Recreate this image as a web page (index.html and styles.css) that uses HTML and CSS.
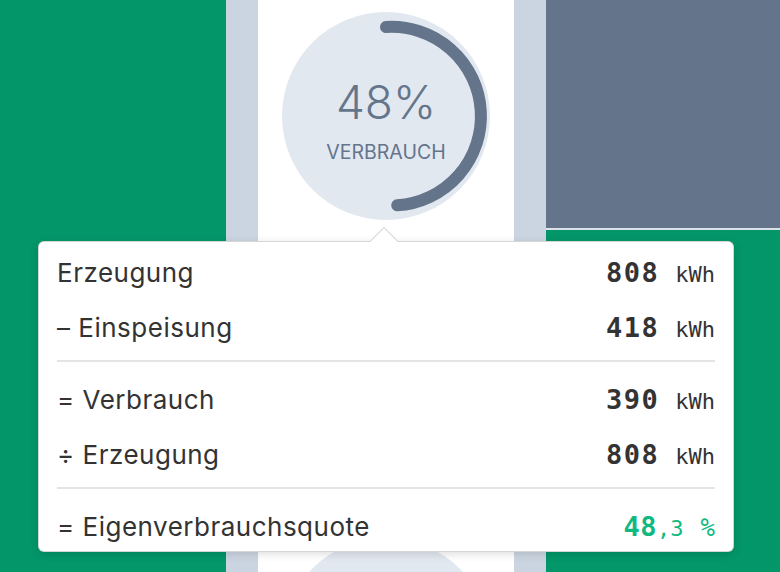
FILE: index.html
```html
<!DOCTYPE html>
<html lang="de">
<head>
<meta charset="utf-8">
<title>Eigenverbrauch</title>
<link rel="stylesheet" href="styles.css">
</head>
<body>
<div class="page">
  <div class="side-left"></div>
  <div class="mid">
    <div class="card">
      <div class="gauge">
        <svg class="gauge-svg" viewBox="0 0 208 208" width="208" height="208">
          <circle cx="104" cy="104" r="104" fill="#e2e8f0"/>
          <path d="M104 15 A89 89 0 0 1 115.2 193.3" fill="none" stroke="#64748b" stroke-width="12" stroke-linecap="round"/>
        </svg>
        <div class="gauge-text">
          <div class="gauge-value">48%</div>
          <div class="gauge-label">VERBRAUCH</div>
        </div>
      </div>
      <div class="gauge gauge-second">
        <svg class="gauge-svg" viewBox="0 0 208 208" width="208" height="208">
          <circle cx="104" cy="104" r="104" fill="#e2e8f0"/>
        </svg>
      </div>
    </div>
  </div>
  <div class="side-right">
    <div class="right-block"></div>
  </div>

  <div class="tooltip">
    <div class="arrow"></div>
    <div class="row">
      <span class="label">Erzeugung</span>
      <span class="value"><span class="num">808</span><span class="unit">kWh</span></span>
    </div>
    <div class="row">
      <span class="label">– Einspeisung</span>
      <span class="value"><span class="num">418</span><span class="unit">kWh</span></span>
    </div>
    <div class="divider"></div>
    <div class="row">
      <span class="label">= Verbrauch</span>
      <span class="value"><span class="num">390</span><span class="unit">kWh</span></span>
    </div>
    <div class="row">
      <span class="label">÷ Erzeugung</span>
      <span class="value"><span class="num">808</span><span class="unit">kWh</span></span>
    </div>
    <div class="divider"></div>
    <div class="row">
      <span class="label">= Eigenverbrauchsquote</span>
      <span class="value green"><span class="num">48</span><span class="dec">,3</span><span class="unit pct">%</span></span>
    </div>
  </div>
</div>
</body>
</html>
```

FILE: styles.css
```css
* { box-sizing: border-box; }

html, body {
  margin: 0;
  padding: 0;
}

body {
  width: 780px;
  height: 572px;
  overflow: hidden;
  background: #039669;
  font-family: "Inter", "Noto Sans", sans-serif;
}

.page {
  position: relative;
  display: flex;
  width: 780px;
  height: 572px;
  background: #039669;
}

.side-left {
  width: 226px;
  flex: none;
}

.mid {
  width: 320px;
  flex: none;
  padding: 0 32px;
  background: #cbd5e1;
}

.card {
  height: 100%;
  background: #ffffff;
  padding: 12px 24px 0;
  overflow: hidden;
}

.gauge {
  position: relative;
  width: 208px;
  height: 208px;
}

.gauge-second {
  margin-top: 318px;
}

.gauge-svg {
  position: absolute;
  left: 0;
  top: 0;
  display: block;
}

.gauge-text {
  position: relative;
  display: flex;
  flex-direction: column;
  align-items: center;
  padding-top: 65px;
  color: #64748b;
}

.gauge-value {
  font-size: 46px;
  line-height: 50px;
  font-weight: 300;
}

.gauge-label {
  margin-top: 14px;
  font-size: 19.5px;
  line-height: 22px;
  font-weight: 400;
}

.side-right {
  flex: 1;
}

.right-block {
  height: 230px;
  background: #64748b;
  border-bottom: 2px solid #dbe2ea;
}

.tooltip {
  position: absolute;
  left: 38px;
  top: 241px;
  width: 696px;
  height: 311px;
  background: #ffffff;
  border: 1px solid rgba(0, 0, 0, 0.16);
  border-radius: 6px;
  box-shadow: 0 2px 8px rgba(0, 0, 0, 0.14);
  padding: 3px 18px 0;
  color: #333333;
}

.arrow {
  position: absolute;
  top: -11px;
  left: 335px;
  width: 20px;
  height: 20px;
  background: #ffffff;
  border-top: 1px solid rgba(0, 0, 0, 0.16);
  border-left: 1px solid rgba(0, 0, 0, 0.16);
  transform: rotate(45deg);
}

.row {
  display: flex;
  justify-content: space-between;
  align-items: baseline;
  height: 55px;
  line-height: 55px;
}

.label {
  font-size: 26px;
  letter-spacing: 0.5px;
}

.value {
  font-family: "DejaVu Sans Mono", "Liberation Mono", monospace;
  white-space: nowrap;
}

.num {
  font-size: 27px;
  font-weight: 700;
  letter-spacing: 1.5px;
}

.dec {
  font-size: 22px;
}

.unit {
  font-size: 22px;
  margin-left: 16px;
}

.green {
  color: #10b981;
}

.green .num {
  letter-spacing: 0.5px;
}

.pct {
  font-size: 24px;
  margin-left: 17px;
}

.divider {
  height: 2px;
  background: #e4e4e7;
  margin: 5px 0 10px;
}
```
